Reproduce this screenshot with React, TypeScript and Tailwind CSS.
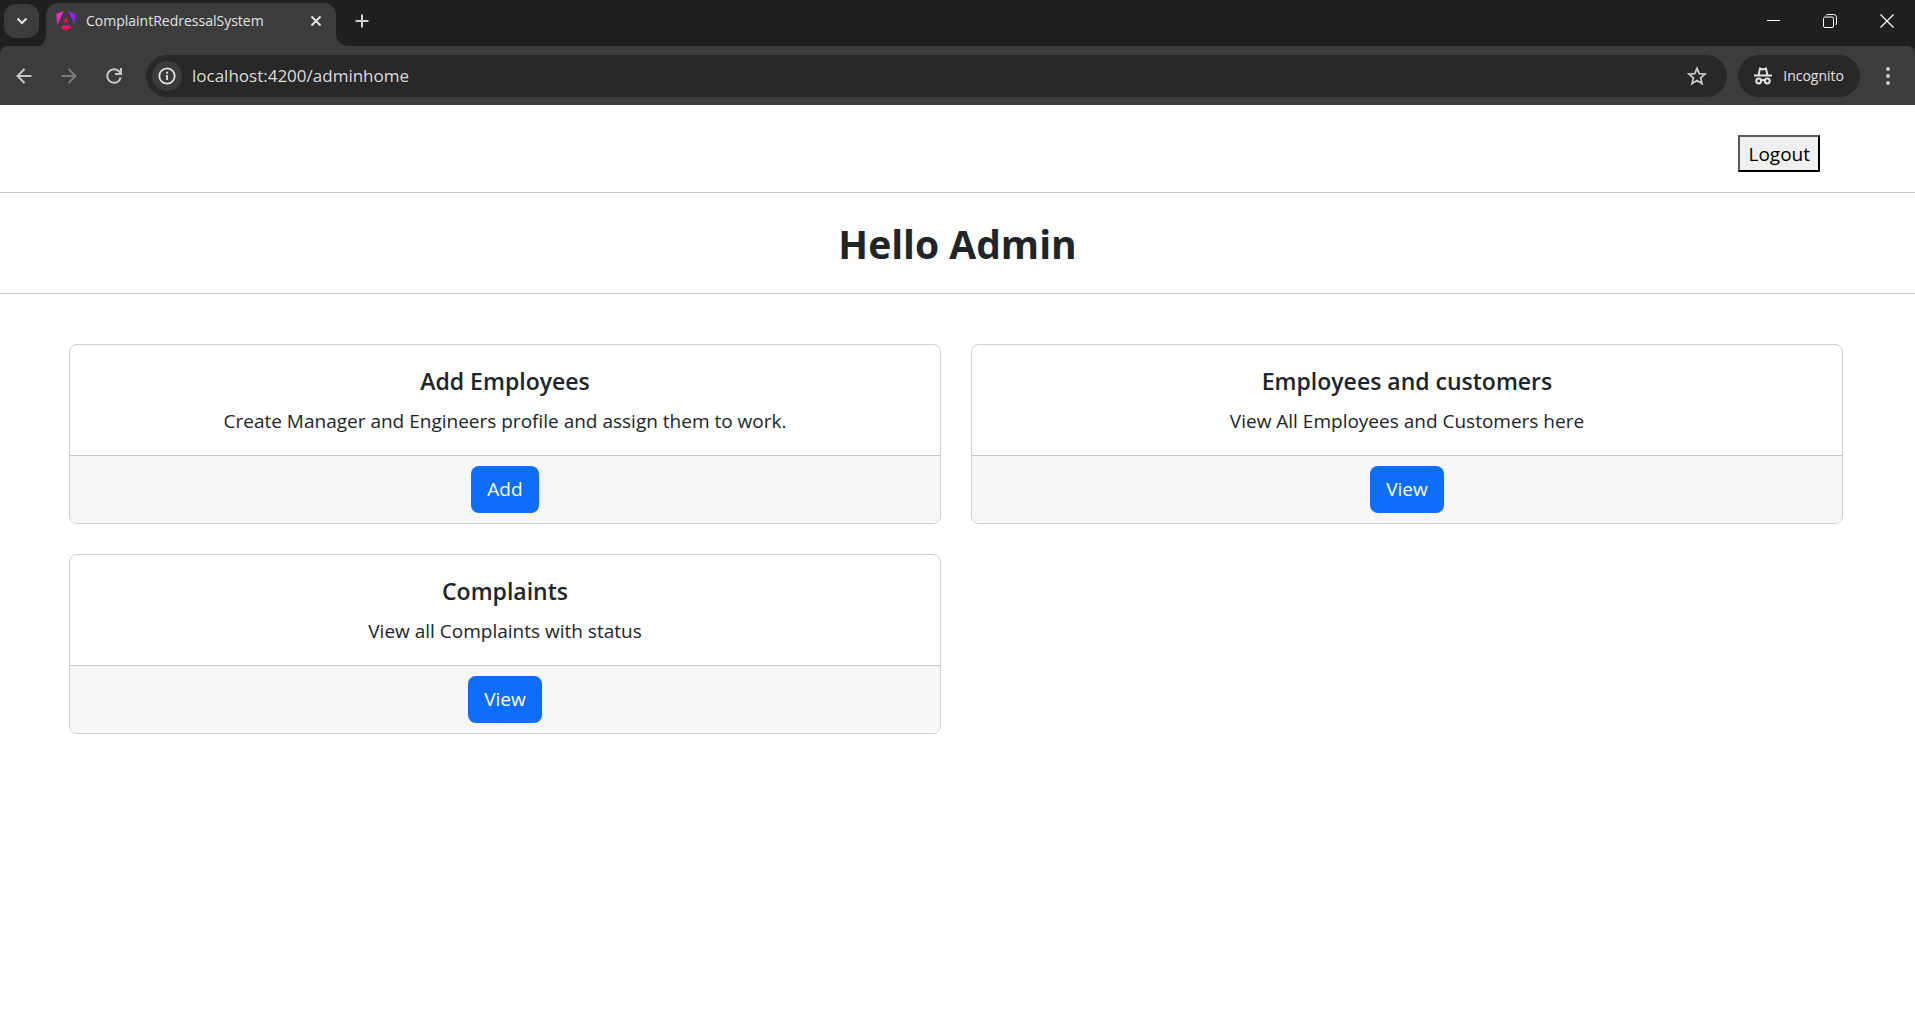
import React from "react";

type CardInfo = { title: string; text: string; action: string };

const cards: CardInfo[] = [
  { title: "Add Employees", text: "Create Manager and Engineers profile and assign them to work.", action: "Add" },
  { title: "Employees and customers", text: "View All Employees and Customers here", action: "View" },
  { title: "Complaints", text: "View all Complaints with status", action: "View" },
];

function AngularLogo() {
  return (
    <svg viewBox="0 0 20 20" className="h-5 w-5 shrink-0" aria-hidden="true">
      <defs>
        <linearGradient id="ng-left" x1="0" y1="0" x2="0" y2="1">
          <stop offset="0" stopColor="#f637e3" />
          <stop offset="1" stopColor="#f0189a" />
        </linearGradient>
        <linearGradient id="ng-right" x1="0" y1="0" x2="1" y2="1">
          <stop offset="0" stopColor="#b32af0" />
          <stop offset="1" stopColor="#6a1df5" />
        </linearGradient>
        <linearGradient id="ng-base" x1="0" y1="0" x2="0" y2="1">
          <stop offset="0" stopColor="#f0128a" />
          <stop offset="1" stopColor="#ff0a3c" />
        </linearGradient>
      </defs>
      <path d="M7.6 0 0.2 3.2 1.2 14.2Z" fill="url(#ng-left)" />
      <path d="M12.4 0 19.8 3.2 18.8 14.2Z" fill="url(#ng-right)" />
      <path d="M10 5.8 12.4 11.6H7.6Z" fill="url(#ng-base)" />
      <path d="M6.2 14.4H13.8L14.9 17 10 19.8 5.1 17Z" fill="url(#ng-base)" />
    </svg>
  );
}

function TabStrip() {
  return (
    <div className="flex h-[46px] items-end bg-[#1f2120]">
      <button aria-label="Search tabs" className="mb-2 ml-1 flex h-[34px] w-[35px] items-center justify-center rounded-xl bg-[#3c3c3c] text-[#e3e3e3]">
        <svg viewBox="0 0 12 8" className="h-2 w-3" fill="none" stroke="currentColor" strokeWidth="2">
          <path d="M1.5 1.5 6 6l4.500-4.500" />
        </svg>
      </button>
      <svg viewBox="0 0 7 12" className="h-3 w-[7px] text-[#3c3c3c]" fill="currentColor" aria-hidden="true">
        <path d="M7 0C7 8 2 12 0 12H7Z" />
      </svg>
      <div className="flex h-[43px] w-[290px] items-center rounded-t-xl bg-[#3c3c3c] pr-[14px] pb-[7px] pl-[10px]">
        <AngularLogo />
        <span className="ml-[10px] grow text-sm text-[#e3e3e3]">ComplaintRedressalSystem</span>
        <button aria-label="Close tab" className="text-[#e3e3e3]">
          <svg viewBox="0 0 12 12" className="h-3 w-3" fill="none" stroke="currentColor" strokeWidth="2">
            <path d="M1.500 1.500l9 9M10.500 1.500l-9 9" />
          </svg>
        </button>
      </div>
      <svg viewBox="0 0 12 12" className="h-3 w-3 text-[#3c3c3c]" fill="currentColor" aria-hidden="true">
        <path d="M0 0A12 12 0 0 0 12 12H0Z" />
      </svg>
      <button aria-label="New tab" className="mb-[18px] ml-[7px] text-[#d0d0d0]">
        <svg viewBox="0 0 14 14" className="h-[14px] w-[14px]" fill="none" stroke="currentColor" strokeWidth="2">
          <path d="M7 0.500v13M0.500 7h13" />
        </svg>
      </button>
      <div className="mr-[21px] mb-[18px] ml-auto flex items-center gap-[43px] text-white">
        <button aria-label="Minimize">
          <svg viewBox="0 0 14 14" className="h-[14px] w-[14px]" stroke="currentColor" shapeRendering="crispEdges">
            <path d="M0.500 6.500h13" />
          </svg>
        </button>
        <button aria-label="Restore">
          <svg viewBox="0 0 14 14" className="h-[14px] w-[14px]" fill="none" stroke="currentColor">
            <rect x="0.500" y="3" width="10" height="10.500" rx="1.500" />
            <path d="M3 1.500Q3.500 0.500 5 0.500h5.500a3 3 0 0 1 3 3V9q0 1.500-1 2" />
          </svg>
        </button>
        <button aria-label="Close">
          <svg viewBox="0 0 14 14" className="h-[14px] w-[14px]" stroke="currentColor" strokeWidth="1.200">
            <path d="M0.500 0.500l13 13M13.500 0.500l-13 13" />
          </svg>
        </button>
      </div>
    </div>
  );
}

function Toolbar() {
  return (
    <div className="bg-[#1f2120]">
      <div className="flex h-[59px] items-center rounded-t-lg bg-[#3c3c3c] pr-[25px] pl-4 text-[#c7c7c7]">
        <button aria-label="Back">
          <svg viewBox="0 0 16 16" className="h-4 w-4" fill="none" stroke="currentColor" strokeWidth="2">
            <path d="M15.500 8H1.500M8.500 1L1.500 8l7 7" />
          </svg>
        </button>
        <button aria-label="Forward" className="ml-[29px] text-[#7c7c7c]">
          <svg viewBox="0 0 16 16" className="h-4 w-4" fill="none" stroke="currentColor" strokeWidth="2">
            <path d="M0.500 8h14M7.500 1l7 7-7 7" />
          </svg>
        </button>
        <button aria-label="Reload" className="ml-[29px]">
          <svg viewBox="0 0 16 16" className="h-4 w-4" fill="none" stroke="currentColor" strokeWidth="2">
            <path d="M14.700 9.500A6.800 6.800 0 1 1 13 3.300L14.500 5" />
            <path d="M15 0v6H9" />
          </svg>
        </button>
        <div className="ml-6 flex h-[42px] grow items-center rounded-full bg-[#282828] pr-5 pl-[6px]">
          <button aria-label="Site information" className="flex h-[30px] w-[30px] items-center justify-center rounded-full bg-[#3c3c3c] text-[#e3e3e3]">
            <svg viewBox="0 0 18 18" className="h-[18px] w-[18px]" fill="none" stroke="currentColor" strokeWidth="1.800">
              <circle cx="9" cy="9" r="7.700" />
              <path d="M9 8v5M9 4.800v1.900" />
            </svg>
          </button>
          <input aria-label="Address" defaultValue="localhost:4200/adminhome" className="ml-[10px] min-w-0 grow bg-transparent text-[17px] leading-6 text-[#dcdcdc] outline-none" />
          <button aria-label="Bookmark this page">
            <svg viewBox="0 0 20 20" className="h-5 w-5" fill="none" stroke="currentColor" strokeWidth="1.800">
              <path d="M10 2.300l2.250 5.300 5.750.500-4.350 3.800 1.300 5.600L10 14.500l-4.950 3 1.300-5.600L2 8.100l5.750-.5Z" />
            </svg>
          </button>
        </div>
        <button className="ml-[11px] flex h-[42px] items-center gap-[11px] rounded-full bg-[#282828] px-4 text-sm text-[#e3e3e3]">
          <svg viewBox="0 0 18 18" className="h-[18px] w-[18px]" fill="none" stroke="currentColor" strokeWidth="2">
            <path d="M0 8.500h18M4.500 8.500L6 1.500 9 2.500l3-1L13.500 8.500" />
            <circle cx="4.700" cy="14" r="2.400" />
            <circle cx="13.300" cy="14" r="2.400" />
            <path d="M7 13.500q2-1 4 0" />
          </svg>
          Incognito
        </button>
        <button aria-label="Menu" className="ml-[26px]">
          <svg viewBox="0 0 4 18" className="h-[18px] w-1" fill="currentColor">
            <circle cx="2" cy="2" r="2" />
            <circle cx="2" cy="9" r="2" />
            <circle cx="2" cy="16" r="2" />
          </svg>
        </button>
      </div>
    </div>
  );
}

function Card({ title, text, action }: CardInfo) {
  return (
    <section className="overflow-hidden rounded-lg border border-[#d0d0d0] text-center">
      <div className="px-5 pt-[21px] pb-[19px]">
        <h2 className="mb-[10px] text-[23px] leading-[30px] font-semibold">{title}</h2>
        <p className="text-[19px] leading-[30px]">{text}</p>
      </div>
      <div className="border-t border-[#c8c8c8] bg-[#f7f7f7] px-5 py-[10px]">
        <button className="h-[47px] rounded-lg bg-[#0d6efd] px-4 text-[19px] text-white">{action}</button>
      </div>
    </section>
  );
}

export default function App() {
  return (
    <div className="min-h-screen bg-white font-['Open_Sans','Noto_Sans',sans-serif] text-[#212529]">
      <TabStrip />
      <Toolbar />
      <main>
        <div className="flex justify-end border-b border-[#c8c8c8] pt-[30px] pr-[95px] pb-5">
          <button className="h-[37px] border-2 border-t-[#5a5a5a] border-r-black border-b-black border-l-[#5a5a5a] bg-[#efefef] px-2 text-[19px] leading-[30px] text-black">
            Logout
          </button>
        </div>
        <h1 className="border-b border-[#c8c8c8] pt-[27px] pb-[25px] text-center text-[39px] leading-[48px] font-bold">Hello Admin</h1>
        <div className="mt-[50px] grid grid-cols-2 gap-[30px] pr-[72px] pl-[69px]">
          {cards.map((card) => (
            <Card key={card.title} {...card} />
          ))}
        </div>
      </main>
    </div>
  );
}
